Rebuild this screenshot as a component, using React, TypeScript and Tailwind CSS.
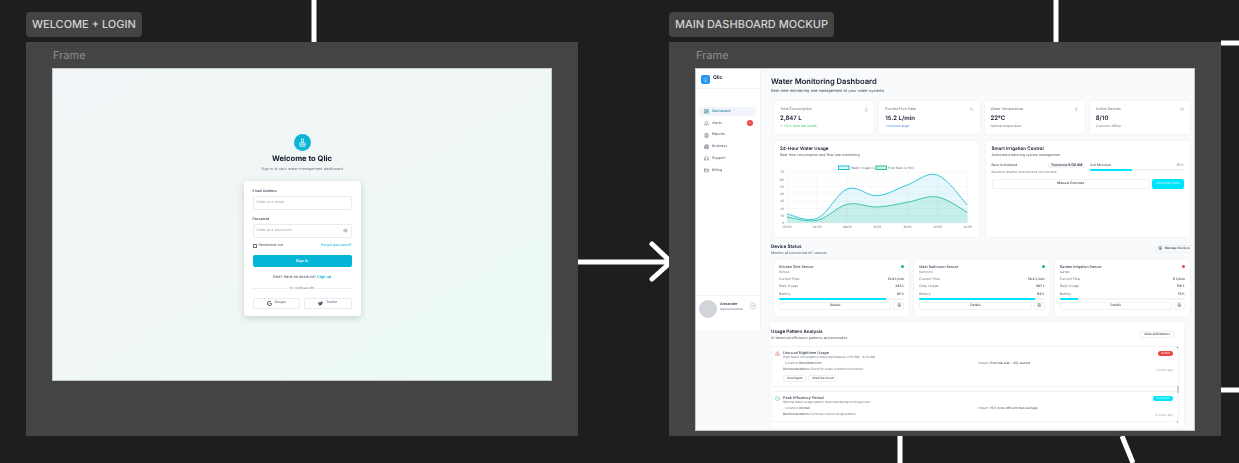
import {
  Activity,
  Bell,
  Building2,
  CircleCheck,
  CreditCard,
  Droplet,
  Eye,
  FileText,
  Headphones,
  LayoutDashboard,
  Settings,
  Stamp,
  Thermometer,
  TriangleAlert,
  Wifi,
} from 'lucide-react';
import { FaGoogle, FaTwitter } from 'react-icons/fa';

type Point = [number, number];

const navItems = [
  { label: 'Dashboard', icon: LayoutDashboard, active: true },
  { label: 'Alerts', icon: Bell, badge: '3' },
  { label: 'Reports', icon: FileText },
  { label: 'Business', icon: Building2 },
  { label: 'Support', icon: Headphones },
  { label: 'Billing', icon: CreditCard },
];

const stats = [
  { label: 'Total Consumption', value: '2,847 L', note: '↑ +12% from last month', tone: 'text-[#22c55e]', icon: Droplet },
  { label: 'Current Flow Rate', value: '15.2 L/min', note: '↗ Normal range', tone: 'text-[#3b82f6]', icon: Activity },
  { label: 'Water Temperature', value: '22°C', note: 'Optimal temperature', tone: 'text-[#6b7280]', icon: Thermometer },
  { label: 'Active Devices', value: '8/10', note: '2 sensors offline', tone: 'text-[#6b7280]', icon: Wifi },
];

const devices = [
  { name: 'Kitchen Sink Sensor', place: 'Kitchen', flow: '12.8 L/min', usage: '245 L', battery: 85, online: true },
  { name: 'Main Bathroom Sensor', place: 'Bathroom', flow: '18.2 L/min', usage: '387 L', battery: 92, online: true },
  { name: 'Garden Irrigation Sensor', place: 'Garden', flow: '0 L/min', usage: '156 L', battery: 15, online: false },
];

const water: Point[] = [[11, 49], [41.3, 53.3], [71.3, 24], [101.3, 30.7], [131.3, 20], [161.3, 10], [191.3, 40]];
const flow: Point[] = [[11, 52], [41.3, 55.3], [71.3, 39.3], [101.3, 42], [131.3, 37.3], [161.3, 32], [191.3, 47.3]];
const hours = ['00:00', '04:00', '08:00', '12:00', '16:00', '20:00', '24:00'];
const ticks = ['70', '60', '50', '40', '30', '20', '10', '0'];

function smooth(points: Point[]) {
  let d = `M${points[0][0]} ${points[0][1]}`;
  for (let i = 0; i < points.length - 1; i++) {
    const p0 = points[Math.max(i - 1, 0)];
    const p1 = points[i];
    const p2 = points[i + 1];
    const p3 = points[Math.min(i + 2, points.length - 1)];
    const c1x = p1[0] + (p2[0] - p0[0]) * 0.18;
    const c1y = p1[1] + (p2[1] - p0[1]) * 0.18;
    const c2x = p2[0] - (p3[0] - p1[0]) * 0.18;
    const c2y = p2[1] - (p3[1] - p1[1]) * 0.18;
    d += ` C${c1x} ${c1y} ${c2x} ${c2y} ${p2[0]} ${p2[1]}`;
  }
  return d;
}

function UsageChart() {
  return (
    <svg viewBox="0 0 200 66" className="w-[200px] h-[66px]">
      <rect x="62.5" y="1" width="10.5" height="3.5" fill="#e0f5fa" stroke="#06b6d4" strokeWidth="0.9" />
      <text x="75" y="4.2" fontSize="3.2" fill="#6b7280">Water Usage (L)</text>
      <rect x="100" y="1" width="10.5" height="3.5" fill="#d1f5e8" stroke="#10b981" strokeWidth="0.9" />
      <text x="112" y="4.2" fontSize="3.2" fill="#6b7280">Flow Rate (L/min)</text>
      {ticks.map((t, i) => (
        <g key={t}>
          <line x1="11" x2="192" y1={7 + i * 7.3} y2={7 + i * 7.3} stroke="#eef0f3" strokeWidth="0.5" />
          <text x="8" y={8.2 + i * 7.3} fontSize="3.2" fill="#6b7280" textAnchor="end">{t}</text>
        </g>
      ))}
      {hours.map((h, i) => (
        <g key={h}>
          <line x1={11 + i * 30.1} x2={11 + i * 30.1} y1="7" y2="58" stroke="#eef0f3" strokeWidth="0.5" />
          <text x={11 + i * 30.1} y="63" fontSize="3.2" fill="#6b7280" textAnchor="middle">{h}</text>
        </g>
      ))}
      <path d={`${smooth(water)} L191.3 58 L11 58 Z`} fill="#06b6d4" fillOpacity="0.1" />
      <path d={`${smooth(flow)} L191.3 58 L11 58 Z`} fill="#10b981" fillOpacity="0.14" />
      <path d={smooth(water)} fill="none" stroke="#22bfd8" strokeWidth="0.9" />
      <path d={smooth(flow)} fill="none" stroke="#2cc096" strokeWidth="0.9" />
    </svg>
  );
}

function Welcome() {
  return (
    <div className="w-[500px] h-[313px] bg-gradient-to-br from-[#f1f5f7] via-[#f0f7f5] to-[#ebfbf3] flex flex-col items-center pt-[66px] outline outline-1 -outline-offset-1 outline-[#c4c8c8] blur-[0.25px]">
      <div className="w-[17px] h-[17px] rounded-full bg-[#0bb5d6] flex items-center justify-center text-white">
        <Stamp size={9} strokeWidth={2} />
      </div>
      <div className="mt-[2px] text-[7.6px] leading-[12px] font-bold text-[#111827]">Welcome to Qlic</div>
      <div className="text-[3.8px] leading-[8px] text-[#6b7280]">Sign in to your water management dashboard</div>
      <div className="mt-[8px] w-[117px] h-[135px] bg-white rounded-[3px] shadow-[0_2px_7px_rgba(0,0,0,0.16)] px-[9px] pt-[7.5px] flex flex-col">
        <div className="text-[3.6px] leading-[5px] font-medium text-[#374151]">Email Address</div>
        <div className="mt-[2.5px] h-[14px] shrink-0 border border-[#e9ebee] rounded-[2px] px-[3px] flex items-center text-[3.6px] text-[#9ca3af]">Enter your email</div>
        <div className="mt-[6.5px] text-[3.6px] leading-[5px] font-medium text-[#374151]">Password</div>
        <div className="mt-[2px] h-[14px] shrink-0 border border-[#e9ebee] rounded-[2px] px-[3px] flex items-center justify-between text-[3.6px] text-[#9ca3af]">
          Enter your password
          <Eye size={5} className="text-[#6b7280]" />
        </div>
        <div className="mt-[5.5px] h-[6px] shrink-0 flex items-center justify-between text-[3.6px]">
          <span className="flex items-center gap-[2px] text-[#4b5563]">
            <span className="w-[4px] h-[4px] border-[0.5px] border-[#6b7280] rounded-[0.5px]" />
            Remember me
          </span>
          <span className="text-[#0bb5d6]">Forgot password?</span>
        </div>
        <div className="mt-[6px] h-[12px] shrink-0 rounded-[2px] bg-[#06b6d8] flex items-center justify-center text-[3.8px] font-semibold text-white">Sign in</div>
        <div className="mt-[7px] text-center text-[3.9px] leading-[6px] text-[#4b5563]">
          Don't have an account? <span className="font-semibold text-[#0bb5d6]">Sign up</span>
        </div>
        <div className="mt-[6px] flex items-center gap-[2px] text-[3.2px] leading-[5px] text-[#6b7280]">
          <span className="flex-1 h-px bg-[#eceef1]" />
          Or continue with
          <span className="flex-1 h-px bg-[#eceef1]" />
        </div>
        <div className="mt-[6.5px] grid grid-cols-2 gap-[4px]">
          <div className="h-[11px] border border-[#e9ebee] rounded-[2px] flex items-center justify-center gap-[3px] text-[3.4px] text-[#4b5563]">
            <FaGoogle size={5} className="text-[#4b5563]" />
            Google
          </div>
          <div className="h-[11px] border border-[#e9ebee] rounded-[2px] flex items-center justify-center gap-[3px] text-[3.4px] text-[#4b5563]">
            <FaTwitter size={5} className="text-[#4b5563]" />
            Twitter
          </div>
        </div>
      </div>
    </div>
  );
}

function Sidebar() {
  return (
    <aside className="w-[66px] h-[262px] shrink-0 bg-white border-r border-[#eef0f3] flex flex-col">
      <div className="h-[21px] border-b border-[#f1f3f5] flex items-center gap-[3px] pl-[6px] pt-[2px]">
        <div className="w-[9px] h-[9px] rounded-[2px] bg-[#2196f3] flex items-center justify-center text-white">
          <Droplet size={5} />
        </div>
        <span className="text-[5px] font-semibold text-[#111827]">Qlic</span>
      </div>
      <nav className="mt-[18px] px-[4px] flex flex-col gap-[2.8px]">
        {navItems.map((item) => (
          <div
            key={item.label}
            className={`h-[9px] rounded-[2px] pl-[5px] pr-[3px] flex items-center gap-[3px] text-[3.6px] ${item.active ? 'bg-[#f1f5f9] text-[#0e7490]' : 'text-[#4b5563]'}`}
          >
            <item.icon size={5} />
            <span className="flex-1">{item.label}</span>
            {item.badge && (
              <span className="w-[6px] h-[6px] rounded-full bg-[#ef4444] text-white text-[3px] flex items-center justify-center">{item.badge}</span>
            )}
          </div>
        ))}
      </nav>
      <div className="mt-auto h-[35px] border-t border-[#f1f3f5] flex items-start pl-[4px] pt-[4px] gap-[3px]">
        <div className="w-[18px] h-[18px] rounded-full bg-[#d1d5db] shrink-0" />
        <div className="pt-[1px] whitespace-nowrap">
          <div className="text-[3.6px] leading-[6px] font-medium text-[#111827]">Alexander</div>
          <div className="text-[3px] leading-[5px] text-[#6b7280]">Agricultural plus</div>
        </div>
        <Settings size={8} strokeWidth={1} className="ml-[3px] mt-[2px] text-[#9ca3af]" />
      </div>
    </aside>
  );
}

function StatCard({ stat }: { stat: (typeof stats)[number] }) {
  return (
    <div className="h-[33px] bg-white rounded-[2px] shadow-[0_0_2px_rgba(0,0,0,0.08)] px-[6px] pt-[6px] relative">
      <div className="text-[3.6px] leading-[5px] text-[#6b7280]">{stat.label}</div>
      <div className="mt-[2px] text-[6px] leading-[9px] font-semibold text-[#111827]">{stat.value}</div>
      <div className={`mt-[1px] text-[3.2px] leading-[5px] ${stat.tone}`}>{stat.note}</div>
      <stat.icon size={4.5} className="absolute right-[6px] top-[6px] text-[#9ca3af]" />
    </div>
  );
}

function DeviceCard({ device }: { device: (typeof devices)[number] }) {
  const rows = [
    ['Current Flow', device.flow],
    ['Daily Usage', device.usage],
    ['Battery', `${device.battery}%`],
  ];
  return (
    <div className="h-[56px] bg-white rounded-[2px] shadow-[0_0_2px_rgba(0,0,0,0.08)] px-[5px] pt-[5px] relative">
      <div className="text-[3.6px] leading-[5px] font-medium text-[#374151]">{device.name}</div>
      <div className="text-[3px] leading-[4px] text-[#6b7280]">{device.place}</div>
      <div className="mt-[3px] flex flex-col gap-[2.3px]">
        {rows.map(([label, value]) => (
          <div key={label} className="flex justify-between text-[3.4px] leading-[5px]">
            <span className="text-[#6b7280]">{label}</span>
            <span className="font-medium text-[#374151]">{value}</span>
          </div>
        ))}
      </div>
      <div className="mt-[1px] h-[2px] bg-[#f1f3f5] rounded-full overflow-hidden">
        <div className="h-full bg-[#00e5ff]" style={{ width: `${device.battery}%` }} />
      </div>
      <div className="mt-[2px] flex gap-[2px]">
        <div className="flex-1 h-[8px] border border-[#f0f1f3] rounded-[2px] flex items-center justify-center text-[3.2px] font-medium text-[#374151]">Details</div>
        <div className="w-[11px] h-[8px] border border-[#f0f1f3] rounded-[2px] flex items-center justify-center text-[#4b5563]">
          <Settings size={4.5} />
        </div>
      </div>
      <span className={`absolute right-[5px] top-[5px] w-[3px] h-[3px] rounded-full ${device.online ? 'bg-[#10b981]' : 'bg-[#ef4444]'}`} />
    </div>
  );
}

function Dashboard() {
  return (
    <div className="w-[500px] h-[363px] flex bg-[#f8fafc] overflow-hidden outline outline-1 -outline-offset-1 outline-[#c4c8c8] blur-[0.25px]">
      <Sidebar />
      <main className="flex-1 pl-[10px] pt-[9px] min-w-0">
        <h1 className="text-[7.6px] leading-[10px] font-semibold text-[#111827]">Water Monitoring Dashboard</h1>
        <p className="mt-px text-[3.9px] leading-[6px] text-[#4b5563]">Real-time monitoring and management of your water systems</p>

        <div className="mt-[7px] ml-[3px] w-[416px] grid grid-cols-4 gap-[5px]">
          {stats.map((s) => (
            <StatCard key={s.label} stat={s} />
          ))}
        </div>

        <div className="mt-[7px] ml-[3px] w-[416px] grid grid-cols-2 gap-[7px]">
          <section className="h-[96px] bg-white rounded-[2px] shadow-[0_0_2px_rgba(0,0,0,0.08)] px-[2px] pt-[6px]">
            <div className="pl-[4px] text-[4.6px] leading-[6px] font-semibold text-[#111827]">24-Hour Water Usage</div>
            <div className="pl-[4px] text-[3.5px] leading-[5px] text-[#4b5563]">Real-time consumption and flow rate monitoring</div>
            <div className="mt-[7px]">
              <UsageChart />
            </div>
          </section>
          <section className="h-[96px] bg-white rounded-[2px] shadow-[0_0_2px_rgba(0,0,0,0.08)] px-[6px] pt-[6px]">
            <div className="text-[4.6px] leading-[6px] font-semibold text-[#111827]">Smart Irrigation Control</div>
            <div className="text-[3.5px] leading-[5px] text-[#4b5563]">Automated watering system management</div>
            <div className="mt-[5px] grid grid-cols-2 gap-[5px]">
              <div>
                <div className="flex items-center justify-between text-[3.4px] leading-[5px] text-[#374151]">
                  Next Scheduled
                  <span className="bg-[#f1f3f5] rounded-full px-[3px] font-medium text-[#111827]">Tomorrow 6:00 AM</span>
                </div>
                <div className="mt-[2px] text-[3.1px] leading-[5px] text-[#6b7280]">Based on weather forecast and soil moisture</div>
              </div>
              <div>
                <div className="flex justify-between text-[3.4px] leading-[5px] text-[#374151]">
                  Soil Moisture
                  <span className="text-[#6b7280]">45%</span>
                </div>
                <div className="mt-[1px] h-[2px] bg-[#f1f3f5] rounded-full overflow-hidden">
                  <div className="h-full w-[45%] bg-[#00e5ff]" />
                </div>
              </div>
            </div>
            <div className="mt-[4px] flex gap-[2px]">
              <div className="flex-1 h-[10px] border border-[#f0f1f3] rounded-[2px] flex items-center justify-center text-[3.4px] font-medium text-[#374151]">Manual Override</div>
              <div className="w-[32px] h-[10px] rounded-[2px] bg-[#00e5ff] flex items-center justify-center text-[3.4px] text-[#c9f7ff]">Schedule Now</div>
            </div>
          </section>
        </div>

        <div className="mt-[7px] w-[422px] h-[12px] flex items-center justify-between">
          <div>
            <div className="text-[4.6px] leading-[6px] font-semibold text-[#111827]">Device Status</div>
            <div className="text-[3.5px] leading-[5px] text-[#4b5563]">Monitor all connected IoT sensors</div>
          </div>
          <div className="h-[8px] border border-[#f0f1f3] rounded-[2px] px-[2px] flex items-center gap-[2px] text-[3.2px] font-medium text-[#374151] -mt-[3px]">
            <Settings size={4.5} />
            Manage Devices
          </div>
        </div>

        <div className="mt-[4px] ml-[3px] w-[416px] grid grid-cols-3 gap-[5px]">
          {devices.map((d) => (
            <DeviceCard key={d.name} device={d} />
          ))}
        </div>

        <section className="mt-[6px] -ml-px w-[414px] h-[106px] bg-white rounded-[2px] shadow-[0_0_2px_rgba(0,0,0,0.08)] flex flex-col">
          <div className="h-[24px] pl-[1px] pr-[10px] pt-[8px] flex justify-between">
            <div>
              <div className="text-[4.6px] leading-[6px] font-semibold text-[#111827]">Usage Pattern Analysis</div>
              <div className="text-[3.5px] leading-[5px] text-[#4b5563]">AI-detected efficiency patterns and anomalies</div>
            </div>
            <div className="h-[7px] mt-[1px] border border-[#f0f1f3] rounded-[2px] px-[3px] flex items-center text-[3.2px] font-medium text-[#374151]">View All Patterns</div>
          </div>
          <div className="relative w-[408px] ml-px flex-1 flex flex-col gap-[4px]">
            <Pattern
              tall
              icon={<TriangleAlert size={5} className="text-[#ef4444]" />}
              title="Unusual Nighttime Usage"
              text="High water consumption detected between 2:00 AM - 4:00 AM"
              location="Main Bathroom"
              impact="Potential leak - 45L wasted"
              advice="Check for leaks in bathroom fixtures"
              when="2 hours ago"
              status="active"
              statusTone="bg-[#ef4444] w-[15px] text-white"
            />
            <Pattern
              icon={<CircleCheck size={5} className="text-[#22c55e]" />}
              title="Peak Efficiency Period"
              text="Optimal water usage pattern detected during morning hours"
              location="Kitchen"
              impact="15% more efficient than average"
              advice="Continue current usage pattern"
              when="6 hours ago"
              status="optimized"
              statusTone="bg-[#00e5ff] w-[20px] text-[#c9f7ff]"
            />
            <div className="absolute right-0 top-0 bottom-[4px] w-[3px] flex flex-col justify-between items-center text-[3px] leading-[3px] text-[#6b7280]">
              <span>▴</span>
              <span className="absolute top-[40px] w-[2px] h-[7px] bg-[#c9ccd1]" />
              <span>▾</span>
            </div>
          </div>
        </section>
      </main>
    </div>
  );
}

function Pattern(props: {
  tall?: boolean;
  icon: React.ReactNode;
  title: string;
  text: string;
  location: string;
  impact: string;
  advice: string;
  when: string;
  status: string;
  statusTone: string;
}) {
  return (
    <div className={`${props.tall ? 'h-[41px]' : 'h-[31px]'} shrink-0 border border-[#f3f4f6] rounded-[2px] pl-[3px] pr-[6px] pt-[3px] flex gap-[3px] relative`}>
      <div className="pt-[1px]">{props.icon}</div>
      <div className="flex-1">
        <div className="text-[3.8px] leading-[5px] font-medium text-[#374151]">{props.title}</div>
        <div className="text-[3.1px] leading-[4px] text-[#6b7280]">{props.text}</div>
        <div className="mt-[1px] pl-[2px] grid grid-cols-2 text-[3.1px] leading-[6px] text-[#6b7280]">
          <span>Location: <span className="text-[#374151]">{props.location}</span></span>
          <span>Impact: <span className="text-[#374151]">{props.impact}</span></span>
        </div>
        <div className="text-[3.1px] leading-[6px] text-[#6b7280]">
          <span className="text-[#374151]">Recommendation:</span> {props.advice}
        </div>
        {props.tall && (
          <div className="mt-[3px] flex gap-[2px]">
            <div className="h-[7px] border border-[#f0f1f3] rounded-[2px] px-[3px] flex items-center text-[3px] text-[#374151]">Investigate</div>
            <div className="h-[7px] border border-[#f0f1f3] rounded-[2px] px-[3px] flex items-center gap-[1px] text-[3px] text-[#374151]">Mark Resolved</div>
          </div>
        )}
      </div>
      <span className={`absolute right-[5px] top-[3.5px] h-[5px] rounded-full flex items-center justify-center text-[3px] ${props.statusTone}`}>{props.status}</span>
      <span className="absolute right-[5px] top-[21px] text-[3.1px] leading-[4px] text-[#9ca3af]">{props.when}</span>
    </div>
  );
}

function CanvasFrame({ label, left, children }: { label: string; left: string; children: React.ReactNode }) {
  return (
    <div className={`absolute top-[12px] ${left} w-[552px]`}>
      <div className="h-[25px] w-fit px-[6px] rounded-[4px] bg-[#444444] flex items-center text-[11px] font-medium text-[#d4d4d4]">{label}</div>
      <div className="mt-[5px] h-[394px] bg-[#444444] pl-[26px]">
        <div className="h-[26px] pt-[6px] pl-[1px] text-[11px] leading-[14px] text-[#8f8f8f]">Frame</div>
        {children}
      </div>
    </div>
  );
}

export default function App() {
  return (
    <div className="relative w-[1239px] h-[463px] overflow-hidden bg-[#1e1e1e] font-['Inter',sans-serif] [text-rendering:geometricPrecision]">
      {/* connectors between the frames */}
      <svg width="1239" height="463" className="absolute inset-0" fill="none" stroke="#ffffff" strokeWidth="5">
        <path d="M314 0V42M1056 0V42M1221 43H1239M1221 390H1239M900 436V463M1122 436L1133 463" />
        <path d="M578 262H671M652 244L671 262L652 279" strokeLinecap="round" strokeLinejoin="round" />
      </svg>
      <CanvasFrame label="WELCOME + LOGIN" left="left-[26px]">
        <Welcome />
      </CanvasFrame>
      <CanvasFrame label="MAIN DASHBOARD MOCKUP" left="left-[669px]">
        <Dashboard />
      </CanvasFrame>
    </div>
  );
}
